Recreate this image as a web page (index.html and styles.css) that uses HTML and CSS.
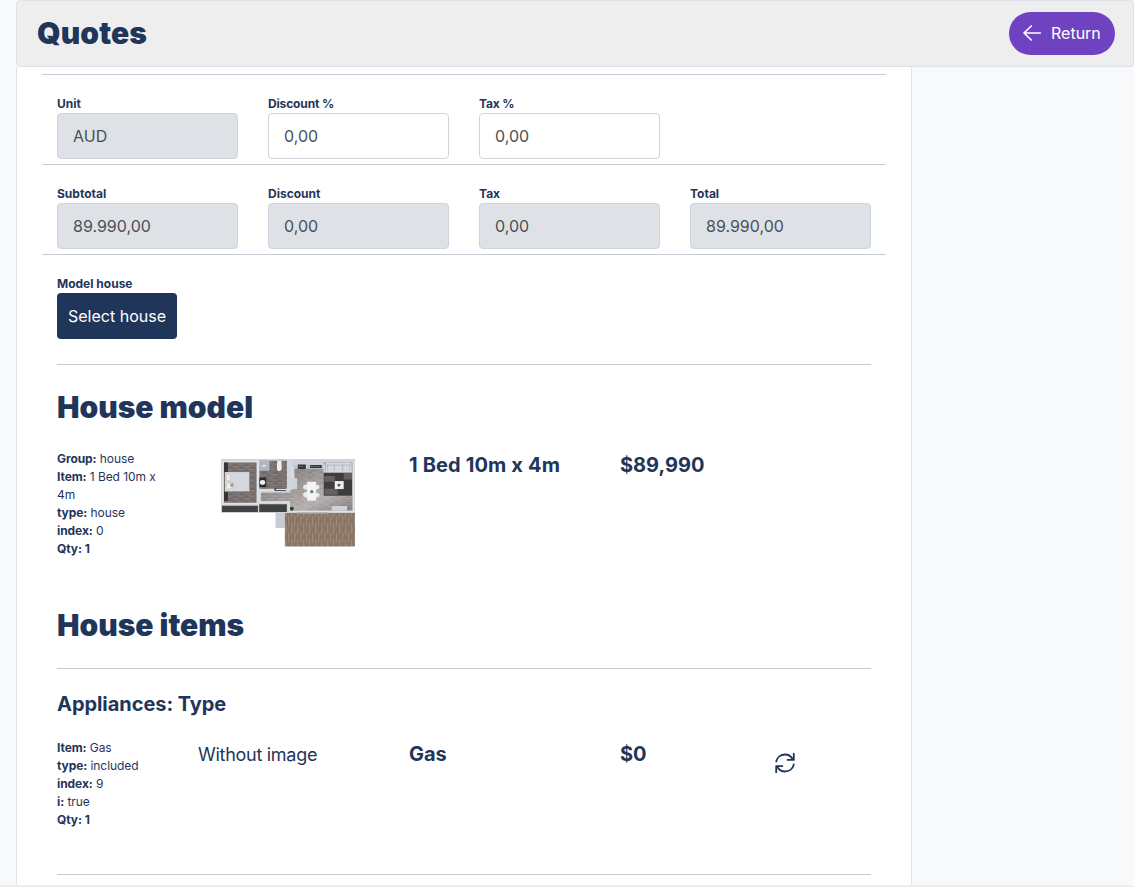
FILE: index.html
```html
<!DOCTYPE html>
<html lang="en">
<head>
<meta charset="utf-8">
<title>Quotes</title>
<link rel="stylesheet" href="styles.css">
</head>
<body>
<div class="page">
  <header class="topbar">
    <h1 class="heading">Quotes</h1>
    <a class="return"><svg class="arrow" viewBox="0 0 18 16" width="18" height="16"><path d="M17.3 8H1M8.3 1L1 8l7.3 7"/></svg>Return</a>
  </header>
  <main class="panel">
    <section class="row">
      <div class="field"><label class="label">Unit</label><div class="input disabled">AUD</div></div>
      <div class="field"><label class="label percent">Discount %</label><div class="input">0,00</div></div>
      <div class="field"><label class="label percent">Tax %</label><div class="input">0,00</div></div>
    </section>
    <section class="row">
      <div class="field"><label class="label">Subtotal</label><div class="input disabled">89.990,00</div></div>
      <div class="field"><label class="label">Discount</label><div class="input disabled">0,00</div></div>
      <div class="field"><label class="label">Tax</label><div class="input disabled">0,00</div></div>
      <div class="field"><label class="label">Total</label><div class="input disabled">89.990,00</div></div>
    </section>
    <section class="row">
      <div class="field"><label class="label">Model house</label><button class="select">Select house</button></div>
    </section>
    <div class="content">
      <section class="model">
        <h2 class="heading">House model</h2>
        <div class="item">
          <div class="details"><b>Group:</b> house<br><b>Item:</b> 1 Bed 10m x<br>4m<br><b>type:</b> house<br><b>index:</b> 0<br><b>Qty: 1</b></div>
          <div class="picture">
            <svg class="plan" viewBox="33 27 403 264" width="134" height="88">
              <defs>
                <pattern id="floor" width="34" height="16" patternUnits="userSpaceOnUse">
                  <rect width="34" height="16" fill="#766f6d"/>
                  <path d="M0 2h20M12 10h22" stroke="#857d79" stroke-width="4"/>
                  <path d="M22 5h12M0 14h15" stroke="#69625f" stroke-width="3"/>
                </pattern>
                <pattern id="deck" width="18" height="50" patternUnits="userSpaceOnUse">
                  <rect width="18" height="50" fill="#8c7868"/>
                  <path d="M2 0v28M11 18v32" stroke="#a08c7b" stroke-width="4"/>
                  <path d="M7 10v34M16 0v30" stroke="#786657" stroke-width="2"/>
                </pattern>
                <linearGradient id="light" x1="0" y1="0" x2="1" y2="1">
                  <stop offset="0" stop-color="#fff" stop-opacity="0"/>
                  <stop offset=".7" stop-color="#fff" stop-opacity=".45"/>
                  <stop offset="1" stop-color="#fff" stop-opacity=".1"/>
                </linearGradient>
              </defs>
              <path d="M33 27H436V189H33z" fill="#cfd3da"/>
              <path d="M197 189h28v45h-28z" fill="#c7ccd3"/>
              <path d="M225 189h211v101H225z" fill="url(#deck)"/>
              <path d="M42 37h98v121H42zM148 32h83v84h-83zM152 128h90v-10h12V46h88v136H240v-27h-88zM342 37h86v145h-86z" fill="url(#floor)"/>
              <path d="M152 128h90v-10h12V46h174v136H240v-27h-88z" fill="url(#light)"/>
              <path d="M36 167h108v19H36zM148 163h83v23h-83z" fill="#414141"/>
              <path d="M42 37h12v30H42zM42 125h12v28H42z" fill="#343538"/>
              <path d="M45 66h73v58H45z" fill="#d5d9df"/>
              <path d="M48 72l13 3v18l-11-2zM49 99l20-2 3 14-21 8z" fill="#efeee9" stroke="#a8a49c"/>
              <path d="M61 100h9v10h-9z" fill="#a29a90"/>
              <path d="M148 32h31v30h-31z" fill="#aeb8c1"/>
              <path d="M158 45h9v4h-9z" fill="#fff"/>
              <path d="M202 32h13v10l1 10q-1 11-8 11t-7-11z" fill="#edf0f3"/>
              <path d="M145 82h24v29h-24zM194 115h34v7h-34z" fill="#292b2d"/>
              <ellipse cx="158" cy="97" rx="8" ry="7" fill="#f0f1f1"/>
              <path d="M250 44h91v12h-91z" fill="#c3c9d0"/>
              <path d="M264 43h24v14h-24zM301 45h35v9h-35z" fill="#33373b"/>
              <path d="M268 49h14M304 49h26" stroke="#a9b0b6" stroke-width="2" stroke-dasharray="4 3"/>
              <path d="M251 84h11v33h-11z" fill="#d0d4d9"/>
              <path d="M342 68h85v69h-85z" fill="#3d3d40"/>
              <path d="M344 78h31v17h-31zM402 69h25v19h-25zM344 116h40v18h-40z" fill="#66615f"/>
              <path d="M347 37h79v30h-79z" fill="#d5d9df"/>
              <path d="M351 45h71M374 45v19M399 45v19M353 44v19M420 44v19" stroke="#a6acb6" stroke-width="2"/>
              <path d="M375 93h27v24h-27z" fill="#eef0f2"/>
              <path d="M382 105l6-5 6 4-7 7z" fill="#565a5c"/>
              <path d="M366 168h46v14h-46z" fill="#cfd3d9"/>
              <path d="M280 107q10-8 19 0v11q-14 4-19-3zM280 130q10-8 19 0v12q-13 3-19-3zM312 107q12-6 17 1v7q-7 5-17 3zM312 130q12-5 17 2v7q-7 5-17 3z" fill="#e9ebee"/>
              <path d="M292 95h27v57h-27z" fill="#f3f4f6"/>
              <circle cx="306" cy="125" r="5" fill="#65815c"/>
              <path d="M38 34H143V161H38zM146 30v92M146 121h46M150 124v32h88v27M236 30v88h-38M248 84V46M343 40v27M240 184h192V34" fill="none" stroke="#e1e4ea" stroke-width="4"/>
              <path d="M233 28h14v92h-14z" fill="#d3d7de"/>
              <circle cx="246" cy="176" r="6" fill="#234b2a"/>
              <path d="M262 187h93v4h-93z" fill="#a6adb6"/>
            </svg>
          </div>
          <div class="name title">1 Bed 10m x 4m</div>
          <div class="name">$89,990</div>
        </div>
      </section>
      <section class="items">
        <h2 class="heading">House items</h2>
        <div class="group">
          <h3 class="subheading">Appliances: Type</h3>
          <div class="item">
            <div class="details"><b>Item:</b> Gas<br><b>type:</b> included<br><b>index:</b> 9<br><b>i:</b> true<br><b>Qty: 1</b></div>
            <div class="missing">Without image</div>
            <div class="name">Gas</div>
            <div class="name">$0</div>
            <svg class="swap" viewBox="0 0 20 20" width="20" height="20"><path d="M1.2 8.5C2.2 4.2 5.8 1.5 10 1.5c3.4 0 6 1.7 7.8 4.8M18.8 .7v6.2h-6.2M18.8 11.5c-1 4.3-4.6 7-8.8 7-3.4 0-6-1.7-7.8-4.8M1.2 19.3v-6.2h6.2"/></svg>
          </div>
        </div>
        <hr class="rule">
      </section>
    </div>
  </main>
  <div class="strip"></div>
</div>
</body>
</html>
```
FILE: styles.css
```css
* { box-sizing: border-box; }
body {
  margin: 0;
  height: 887px;
  overflow: hidden;
  background: #f8f9fb;
  color: #1f355a;
  font: 400 16px/1.5 Inter, sans-serif;
}
h1, h2, h3 { margin: 0; }
.page { height: 887px; display: flex; flex-direction: column; }
.topbar {
  flex: none;
  height: 67px;
  margin-left: 16px;
  padding: 0 18px 0 20px;
  display: flex;
  align-items: center;
  justify-content: space-between;
  background: #eee;
  border: 1px solid #dee1e8;
  border-radius: 4px;
}
.heading { font-size: 30px; line-height: 36px; font-weight: 900; }
.topbar .heading { padding-bottom: 2px; letter-spacing: .1px; }
.return {
  width: 106px;
  height: 43px;
  display: flex;
  align-items: center;
  padding: 0 0 2px 14px;
  gap: 10px;
  border-radius: 22px;
  background: #6f42c1;
  color: #fff;
}
.arrow, .swap { fill: none; stroke: currentColor; stroke-width: 1.7; stroke-linecap: round; stroke-linejoin: round; }
.panel {
  flex: none;
  width: 896px;
  height: 818px;
  margin-left: 16px;
  padding: 7px 25px 0;
  background: #fff;
  border: solid #dee1e6;
  border-width: 0 1px;
}
.row {
  height: 90px;
  padding: 20px 15px 0;
  display: grid;
  grid-template-columns: repeat(4, 181px);
  gap: 30px;
  border-top: 1px solid #c4cad6;
}
.label { display: block; font-size: 12px; line-height: 18px; font-weight: 700; }
.percent { letter-spacing: -.15px; }
.input {
  height: 46px;
  padding: 0 15px;
  line-height: 44px;
  border: 1px solid #ced4da;
  border-radius: 4px;
  color: #495057;
  background: #fff;
}
.disabled { background: #dee2e6; }
.select {
  width: 120px;
  height: 46px;
  padding: 0;
  border: 0;
  border-radius: 4px;
  background: #1f355a;
  color: #fff;
  font: inherit;
}
.content { margin: 20px 15px 0; }
.model { height: 218px; padding-top: 24px; border-top: 1px solid #c4cad6; }
.items { padding-top: 25px; }
.item {
  display: grid;
  grid-template-columns: 111px 181px 181px 125px auto;
  column-gap: 30px;
  align-items: start;
}
.model .item { margin-top: 25px; }
.details { font-size: 12px; line-height: 18px; letter-spacing: -.08px; }
.details b { font-weight: 700; }
.picture { display: flex; justify-content: center; padding: 9px 2px 0 0; }
.name { font-size: 20px; line-height: 30px; font-weight: 700; }
.title { letter-spacing: .14px; }
.missing { font-size: 18px; line-height: 32px; letter-spacing: -.28px; }
.group { height: 206px; margin-top: 25px; padding-top: 20px; border-top: 1px solid #c4cad6; }
.subheading { font-size: 20px; line-height: 30px; font-weight: 700; letter-spacing: -.05px; }
.group .item { margin-top: 20px; }
.swap { margin: 14px 0 0 -.5px; stroke-width: 1.8; }
.rule { margin: 0; border: 0; border-top: 1px solid #c4cad6; }
.strip { height: 2px; background: #eee; }
```
